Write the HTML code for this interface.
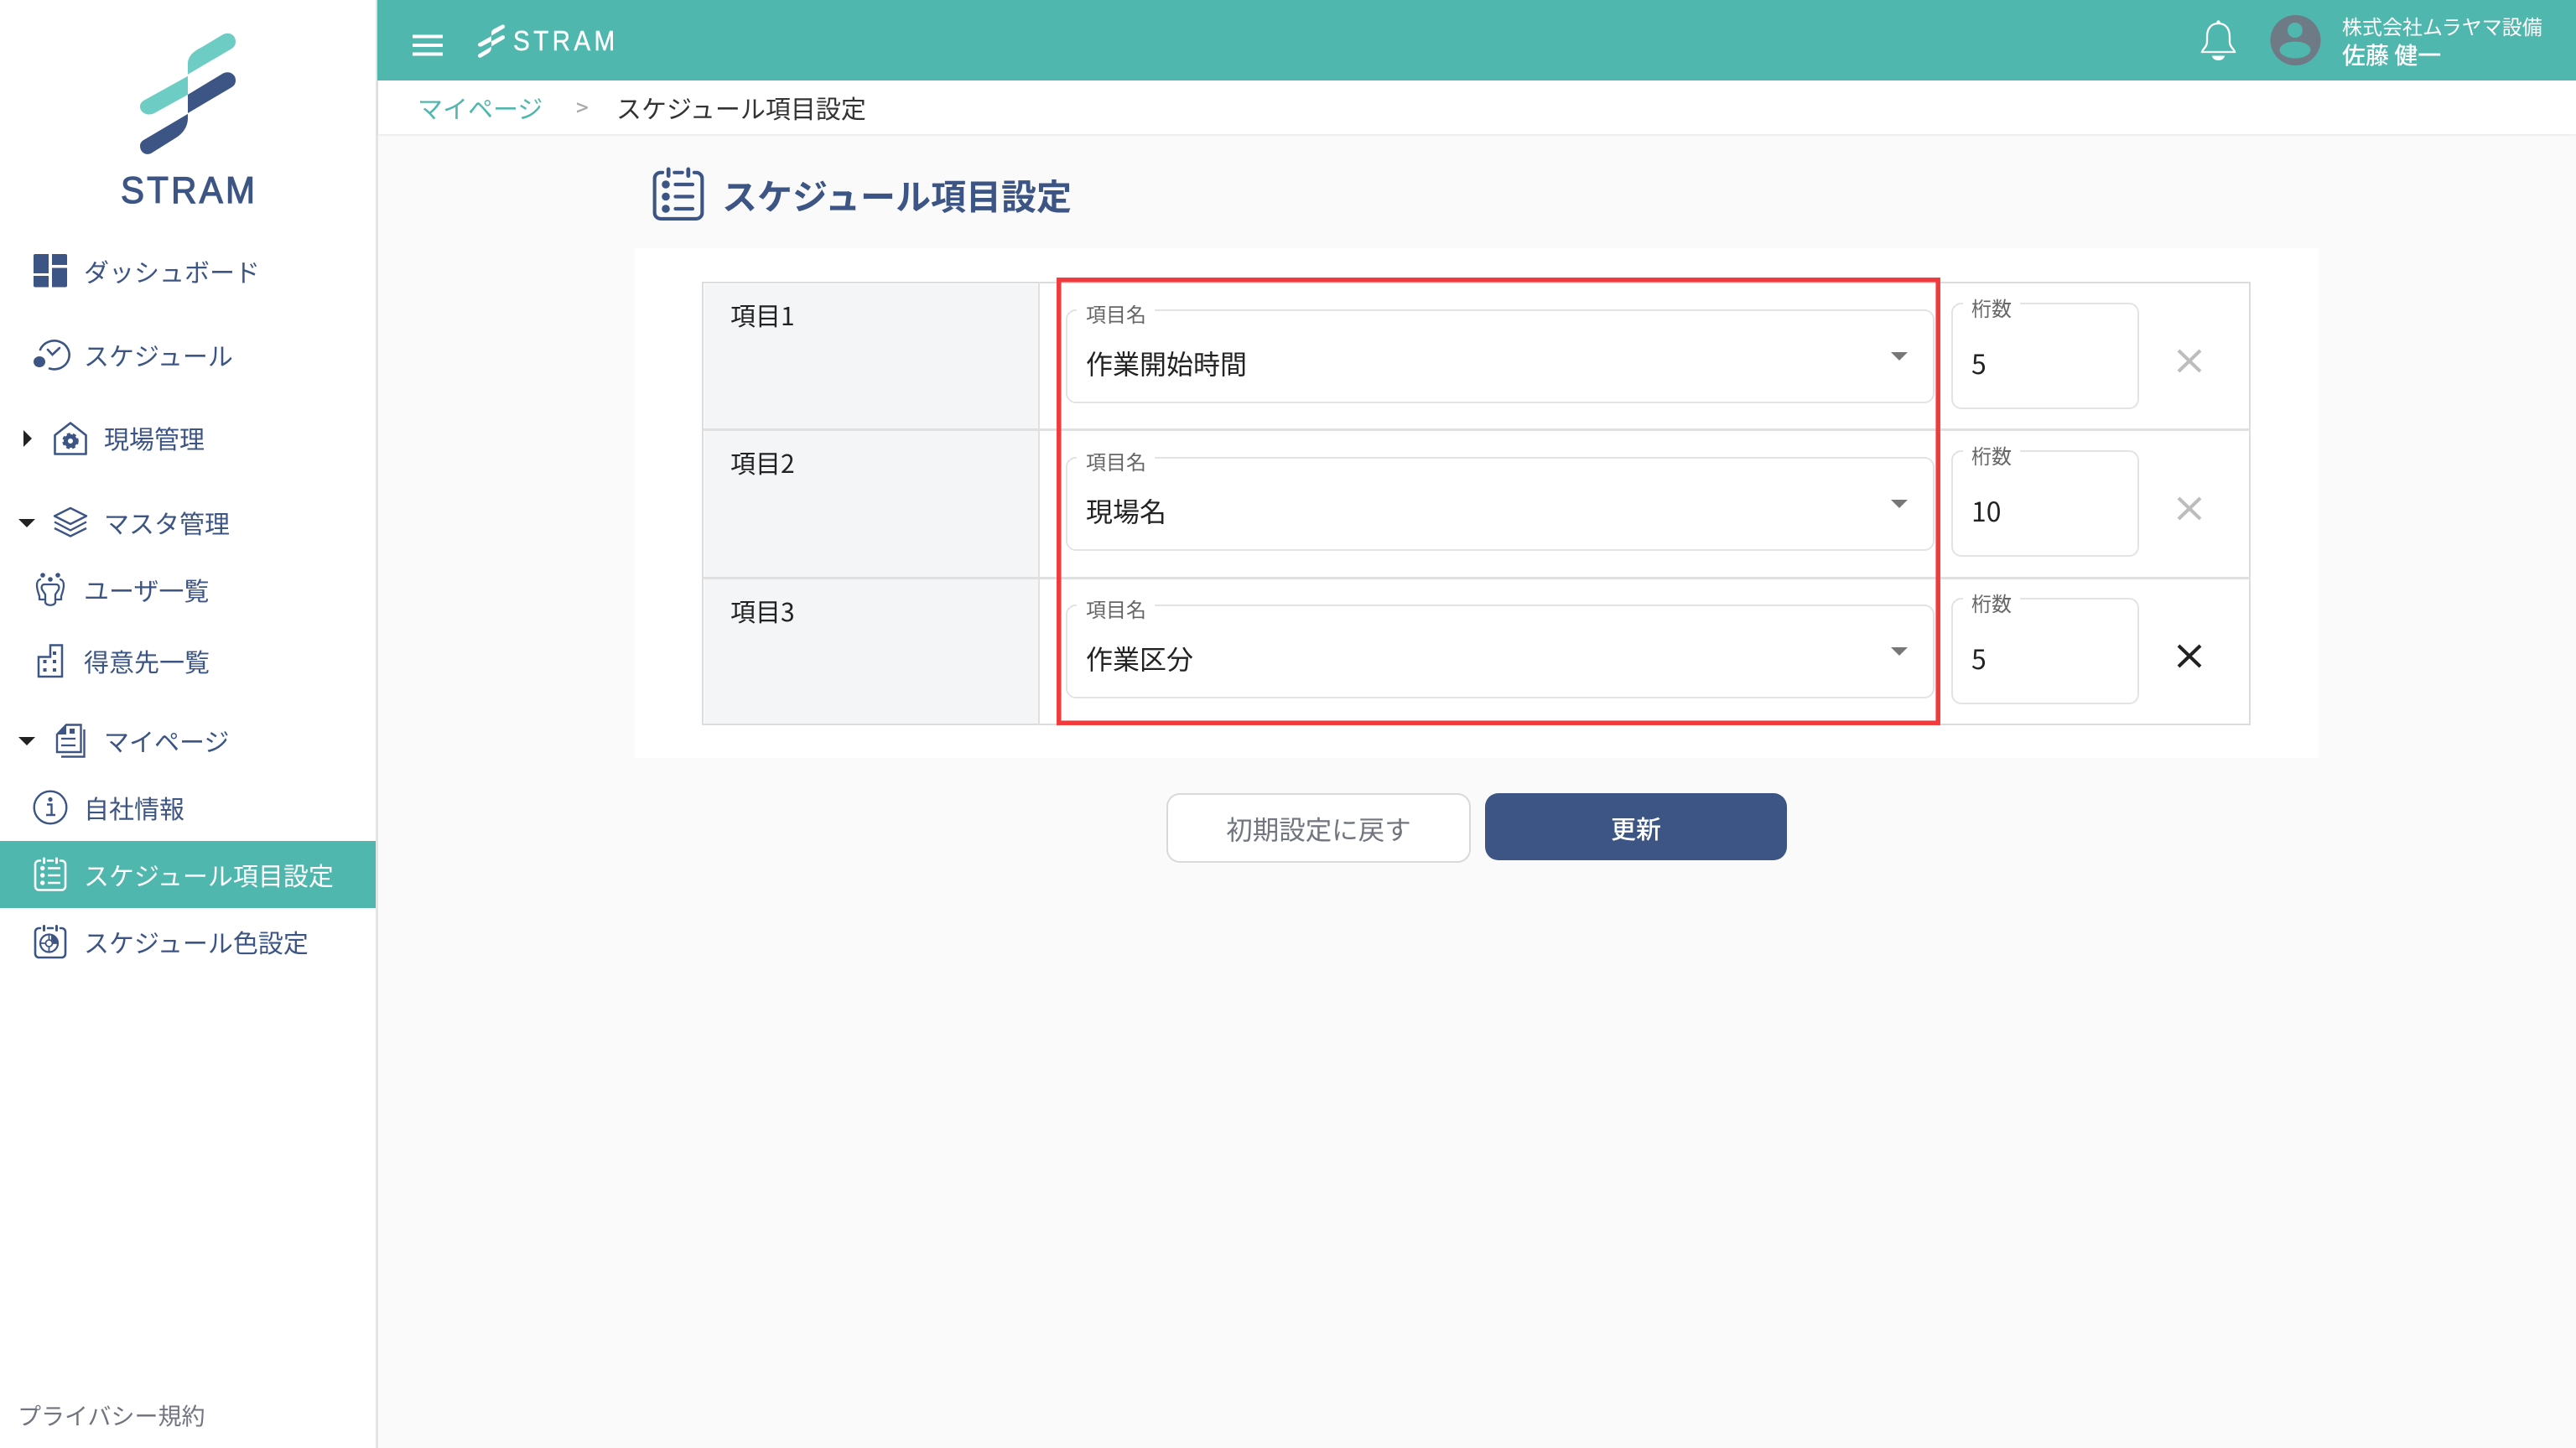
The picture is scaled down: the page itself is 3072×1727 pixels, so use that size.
<!DOCTYPE html>
<html lang="ja">
<head>
<meta charset="utf-8">
<title>スケジュール項目設定</title>
<style>
html,body{margin:0;padding:0;width:3072px;height:1727px;overflow:hidden;background:#fafafa;}
body{position:relative;font-family:"Noto Sans CJK JP","Liberation Sans",sans-serif;color:#222;}
.a{position:absolute;}
.t{position:absolute;white-space:nowrap;line-height:60px;height:60px;}
.m{font-size:30px;color:#3c5585;}
.box{position:absolute;background:#fff;border:2.5px solid #e3e3e3;border-radius:12px;box-sizing:border-box;}
.lb{position:absolute;background:#fff;font-size:24px;color:#666;height:30px;line-height:30px;white-space:nowrap;box-sizing:border-box;}
.v{font-size:32px;color:#222;}
svg{position:absolute;left:0;top:0;}
</style>
</head>
<body>
<!-- sidebar -->
<div class="a" style="left:0;top:0;width:448px;height:1727px;background:#fff;"></div>
<div class="a" style="left:448px;top:0;width:3px;height:1727px;background:#e4e4e4;"></div>
<div class="a" style="left:0;top:1003px;width:448px;height:80px;background:#50b7ae;"></div>
<!-- header -->
<div class="a" style="left:450px;top:0;width:2622px;height:96px;background:#50b7ae;"></div>
<div class="a" style="left:451px;top:96px;width:2621px;height:64px;background:#fff;box-shadow:0 1px 3px rgba(0,0,0,.08);"></div>
<!-- card -->
<div class="a" style="left:757px;top:296px;width:2008px;height:608px;background:#fff;"></div>
<!-- table -->
<div class="a" style="left:837px;top:336px;width:1847px;height:529px;border:2.5px solid #dcdcdc;box-sizing:border-box;"></div>
<div class="a" style="left:839.500px;top:338.500px;width:398.500px;height:524px;background:#f3f5f6;"></div>
<div class="a" style="left:838px;top:511px;width:1846px;height:2.500px;background:#e0e0e0;"></div>
<div class="a" style="left:838px;top:688px;width:1846px;height:2.500px;background:#e0e0e0;"></div>
<div class="a" style="left:1238px;top:336px;width:2px;height:529px;background:#e0e0e0;"></div>

<div class="t" style="left:871px;top:345px;font-size:30px;">項目1</div>
<div class="t" style="left:871px;top:521px;font-size:30px;">項目2</div>
<div class="t" style="left:871px;top:698px;font-size:30px;">項目3</div>

<!-- selects -->
<div class="box" style="left:1271px;top:369px;width:1036px;height:112px;"></div>
<div class="lb" style="left:1284px;top:359px;width:93px;padding-left:11px;">項目名</div>
<div class="t v" style="left:1295px;top:403px;">作業開始時間</div>
<div class="box" style="left:1271px;top:545px;width:1036px;height:112px;"></div>
<div class="lb" style="left:1284px;top:535px;width:93px;padding-left:11px;">項目名</div>
<div class="t v" style="left:1295px;top:579px;">現場名</div>
<div class="box" style="left:1271px;top:721px;width:1036px;height:112px;"></div>
<div class="lb" style="left:1284px;top:711px;width:93px;padding-left:11px;">項目名</div>
<div class="t v" style="left:1295px;top:755px;">作業区分</div>

<!-- numeric fields -->
<div class="box" style="left:2327px;top:361px;width:224px;height:127px;"></div>
<div class="lb" style="left:2341px;top:352px;width:68px;padding-left:10px;">桁数</div>
<div class="t v" style="left:2351px;top:403px;">5</div>
<div class="box" style="left:2327px;top:537px;width:224px;height:127px;"></div>
<div class="lb" style="left:2341px;top:528px;width:68px;padding-left:10px;">桁数</div>
<div class="t v" style="left:2351px;top:579px;">10</div>
<div class="box" style="left:2327px;top:713px;width:224px;height:127px;"></div>
<div class="lb" style="left:2341px;top:704px;width:68px;padding-left:10px;">桁数</div>
<div class="t v" style="left:2351px;top:755px;">5</div>

<!-- buttons -->
<div class="a" style="left:1391px;top:946px;width:363px;height:83px;background:#fff;border:2.5px solid #d9d9d9;border-radius:16px;box-sizing:border-box;"></div>
<div class="t" style="left:1391px;top:958px;width:363px;text-align:center;font-size:31.500px;color:#70757f;">初期設定に戻す</div>
<div class="a" style="left:1771px;top:946px;width:360px;height:80px;background:#3c5585;border-radius:16px;"></div>
<div class="t" style="left:1771px;top:957px;width:360px;text-align:center;font-size:30px;color:#fff;font-weight:500;">更新</div>

<!-- breadcrumb & title -->
<div class="t" style="left:498px;top:98px;font-size:30px;color:#50b7ae;">マイページ</div>
<div class="t" style="left:687px;top:98px;font-size:26px;color:#aaa;font-weight:500;">&gt;</div>
<div class="t" style="left:735px;top:98px;font-size:30px;color:#333;">スケジュール項目設定</div>
<div class="t" style="left:861px;top:203px;font-size:42px;font-weight:700;color:#3c5585;">スケジュール項目設定</div>

<!-- header right -->
<div class="t" style="left:2793px;top:1px;font-size:24px;color:#fff;">株式会社ムラヤマ設備</div>
<div class="t" style="left:2793px;top:35px;font-size:28px;color:#fff;font-weight:500;">佐藤 健一</div>

<!-- menu -->
<div class="t m" style="left:100px;top:293px;">ダッシュボード</div>
<div class="t m" style="left:100px;top:393px;">スケジュール</div>
<div class="t m" style="left:124px;top:492px;">現場管理</div>
<div class="t m" style="left:124px;top:593px;">マスタ管理</div>
<div class="t m" style="left:100px;top:673px;">ユーザ一覧</div>
<div class="t m" style="left:100px;top:758px;">得意先一覧</div>
<div class="t m" style="left:124px;top:853px;">マイページ</div>
<div class="t m" style="left:100px;top:933px;">自社情報</div>
<div class="t m" style="left:100px;top:1013px;color:#fff;">スケジュール項目設定</div>
<div class="t m" style="left:100px;top:1093px;">スケジュール色設定</div>
<div class="t" style="left:21px;top:1658px;font-size:28px;color:#70757f;">プライバシー規約</div>

<svg width="3072" height="1727" viewBox="0 0 3072 1727" xmlns="http://www.w3.org/2000/svg">
<defs>
<symbol id="cal" viewBox="0 0 40 40" overflow="visible">
  <path d="M8 4H6.5A4.5 4.5 0 0 0 2 8.500V34.500A4.500 4.500 0 0 0 6.500 39H33.500A4.500 4.500 0 0 0 38 34.500V8.500A4.500 4.500 0 0 0 33.500 4H32M17 4H23" fill="none" stroke="currentColor" stroke-width="2.600" stroke-linecap="round"/>
  <path d="M12.500 1.500V6.500M27.500 1.500V6.500" fill="none" stroke="currentColor" stroke-width="3" stroke-linecap="round"/>
</symbol>
</defs>

<!-- big logo -->
<g id="lg">
<path fill="#6dcdc5" d="M224 88.800V76C224 67.500 230 61.500 240 56.600L266 41C273 37.500 281 41.500 281 49.500C281 53.500 279.500 56 276 58.200Z"/>
<path fill="#6dcdc5" d="M224 90.700V112.900L184 135C176 139 167 134.500 167 127C167 123.500 169 121 173 119Z"/>
<path fill="#3c5585" d="M224 112.900L266 87.500C273 84 281 88 281 95.700C281 99.500 279.500 102 276 104.200L224 135Z"/>
<path fill="#3c5585" d="M224 135.900V141C224 151 218 160 208 165.500L180 183C173 186 167 181 167 174C167 170.500 169 168 173 166Z"/>
</g>
<text transform="translate(144,242) scale(1,1.060)" font-family="Liberation Sans, sans-serif" font-size="42" fill="#3c5585" stroke="#3c5585" stroke-width="1.200" textLength="160" lengthAdjust="spacing">STRAM</text>

<!-- header logo -->
<g fill="#fff" transform="translate(570,29) scale(.2807,.2778) translate(-167,-40)">
<path d="M224 88.800V76.500C224 68 230 62 240 57.400L268 42.500C274 39.500 281 43 281 49.800C281 53.500 280 56 276 58.200Z"/>
<path d="M224 90.700V112.900L184 134C177 138 167 135 167 127.500C167 124 169 121.500 173 119.500Z"/>
<path d="M224 112.900L268 88.500C274 85.500 281 89 281 95.700C281 99 280 101.500 276 103.700L224 135Z"/>
<path d="M224 135.900V141C224 151 218 160 208 165.500L180 182C174 185 167 181 167 174.500C167 171 169 168.500 173 166.500Z"/>
</g>
<text transform="translate(612,60) scale(.9,1)" font-family="Liberation Sans, sans-serif" font-size="33" fill="#fff" stroke="#fff" stroke-width=".4" letter-spacing="4.800">STRAM</text>

<!-- hamburger -->
<path d="M492 43.500H528M492 54H528M492 64.500H528" stroke="#fff" stroke-width="4" fill="none"/>

<!-- bell -->
<path d="M2645.500 28C2636 28 2632 35 2632 44V50C2632 56 2627 58 2626 62H2665C2664 58 2659 56 2659 50V44C2659 35 2655 28 2645.500 28Z" fill="none" stroke="#fff" stroke-width="2.300"/>
<circle cx="2645.500" cy="26.500" r="2.200" fill="#fff"/>
<path d="M2638 66.500H2653A7.500 5.500 0 0 1 2638 66.500Z" fill="#fff"/>

<!-- avatar -->
<circle cx="2737.500" cy="48" r="30" fill="#6f7a87"/>
<circle cx="2737" cy="36" r="9" fill="#50b7ae"/>
<ellipse cx="2737" cy="59.500" rx="18.500" ry="10" fill="#50b7ae"/>

<!-- sidebar chevrons -->
<path d="M28 513L38 523L28 533Z" fill="#222"/>
<path d="M22 619H42L32 629Z" fill="#222"/>
<path d="M22 879H42L32 889Z" fill="#222"/>

<!-- dashboard icon -->
<g fill="#3c5585">
<path d="M42 303H58V326H40V305A2 2 0 0 1 42 303Z"/>
<path d="M62 303H78A2 2 0 0 1 80 305V316H62Z"/>
<path d="M40 329H58V342.500H42A2 2 0 0 1 40 340.500Z"/>
<path d="M62 319.500H80V340.500A2 2 0 0 1 78 342.500H62Z"/>
</g>

<!-- schedule icon -->
<g fill="none" stroke="#3c5585" stroke-width="2.600" stroke-linecap="round">
<path d="M48 417A18 17 0 1 1 59 439.500"/>
<path d="M57 417L62.500 423L71 415"/>
</g>
<ellipse cx="47" cy="431.500" rx="7" ry="6.500" fill="#3c5585"/>

<!-- home gear icon -->
<path d="M65.500 541.500V519L84 504.500L102.500 519V541.500Z" fill="none" stroke="#3c5585" stroke-width="2.600" stroke-linejoin="round"/>
<circle cx="84" cy="526" r="5.500" fill="none" stroke="#3c5585" stroke-width="5"/>
<circle cx="84" cy="526" r="8.500" fill="none" stroke="#3c5585" stroke-width="2.500" stroke-dasharray="4 3.120"/>

<!-- layers icon -->
<g fill="none" stroke="#3c5585" stroke-width="2.400" stroke-linejoin="round">
<path d="M84 606L103 615.500L84 625L65 615.500Z"/>
<path d="M65 622.500L84 632.500L103 622.500"/>
<path d="M65 630L84 639.500L103 630"/>
</g>

<!-- users icon -->
<g fill="#3c5585">
<circle cx="51" cy="686" r="2.800"/><circle cx="69" cy="686" r="2.800"/><circle cx="60" cy="691" r="2.800"/>
</g>
<g fill="none" stroke="#3c5585" stroke-width="2.300" stroke-linejoin="round" stroke-linecap="round">
<path d="M53 697H67C70 697 71 700 70 703L66 709V718C66 723 54 723 54 718V709L50 703C49 700 50 697 53 697Z"/>
<path d="M48 691C45 692 44 694 44 698C44 703 46 708 47 711V715H52"/>
<path d="M72 691C75 692 76 694 76 698C76 703 74 708 73 711V715H68"/>
</g>

<!-- building icon -->
<path d="M46 783.500H60V769.500H74V807H46Z" fill="none" stroke="#3c5585" stroke-width="2.500"/>
<g fill="#3c5585">
<rect x="63" y="777" width="4" height="4"/>
<rect x="51.500" y="787" width="4" height="4"/><rect x="63" y="787" width="4" height="4"/>
<rect x="51.500" y="797" width="4" height="4"/><rect x="63" y="797" width="4" height="4"/>
</g>

<!-- document icon -->
<g fill="none" stroke="#3c5585" stroke-width="2.400">
<path d="M68 876L79 864.500H96.500V897H68Z"/>
<path d="M100.500 870V902.500H73"/>
<path d="M73 881H90M73 889H90" stroke-width="2.200"/>
</g>
<path d="M68 876H79V864.500Z" fill="#3c5585"/>
<rect x="83" y="869" width="6" height="6" fill="#3c5585"/>

<!-- info icon -->
<circle cx="60" cy="963" r="19.300" fill="none" stroke="#3c5585" stroke-width="2.400"/>
<circle cx="60" cy="953.500" r="2.600" fill="#3c5585"/>
<path d="M56 959.500H61.500V971.500M55 972H66" fill="none" stroke="#3c5585" stroke-width="2.400"/>

<!-- active list icon -->
<g color="#fff">
<use href="#cal" x="40" y="1022.500" width="40" height="40"/>
<g fill="#fff"><circle cx="50.700" cy="1035.500" r="2.700"/><circle cx="50.700" cy="1044" r="2.700"/><circle cx="50.700" cy="1053" r="2.700"/></g>
<path d="M57 1035.500H72M57 1044H72M57 1053H72" stroke="#fff" stroke-width="2.400" fill="none"/>
</g>

<!-- color settings icon -->
<g color="#3c5585">
<use href="#cal" x="40" y="1103" width="40" height="40"/>
<circle cx="58.500" cy="1125" r="10.500" fill="none" stroke="#3c5585" stroke-width="2.200"/>
<circle cx="58.500" cy="1125" r="4" fill="none" stroke="#3c5585" stroke-width="1.800"/>
<path d="M58.500 1115V1121M58.500 1129V1135M48.500 1125H54.500M62.500 1125H68.500" stroke="#3c5585" stroke-width="1.800" fill="none"/>
<path d="M61 1115.500A10.500 10.500 0 0 1 69 1125H63A4 4 0 0 0 61 1121Z" fill="#3c5585"/>
</g>

<!-- title icon -->
<g color="#3c5585">
<use href="#cal" x="777.500" y="199" width="63" height="64"/>
<g fill="#3c5585"><circle cx="794" cy="220" r="4.800"/><circle cx="794" cy="234.500" r="4.800"/><circle cx="794" cy="249" r="4.800"/></g>
<path d="M805.500 220H826M805.500 234.500H826M805.500 249H826" stroke="#3c5585" stroke-width="4.200" stroke-linecap="round" fill="none"/>
</g>

<!-- select arrows -->
<g fill="#777">
<path d="M2255 420H2275L2265 430Z"/>
<path d="M2255 596H2275L2265 606Z"/>
<path d="M2255 772H2275L2265 782Z"/>
</g>

<!-- delete icons -->
<path d="M2598 418L2624 443M2624 418L2598 443" stroke="#bdbdbd" stroke-width="4" fill="none"/>
<path d="M2598 594L2624 619M2624 594L2598 619" stroke="#bdbdbd" stroke-width="4" fill="none"/>
<path d="M2598 770L2624 795M2624 770L2598 795" stroke="#222" stroke-width="4" fill="none"/>

<!-- red highlight -->
<rect x="1262.800" y="333.800" width="1048.400" height="528.400" fill="none" stroke="#f23a3c" stroke-width="5.500"/>
</svg>
</body>
</html>
